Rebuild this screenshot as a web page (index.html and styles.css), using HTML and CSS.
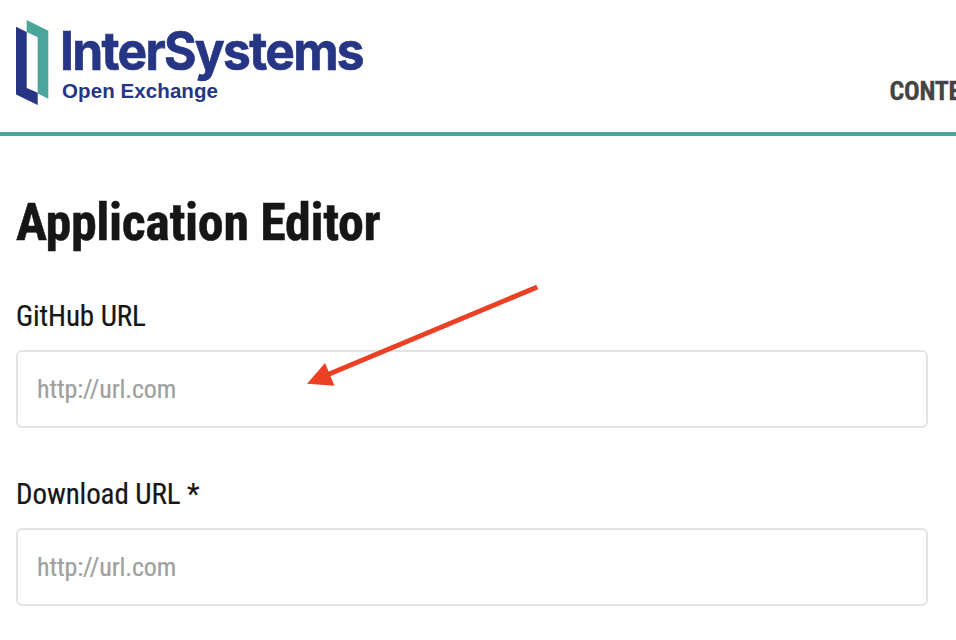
FILE: index.html
```html
<!DOCTYPE html>
<html lang="en">
<head>
<meta charset="utf-8">
<title>Application Editor</title>
<link rel="stylesheet" href="styles.css">
</head>
<body>
<header class="header">
  <div class="brand">
    <svg class="mark" viewBox="0 0 34 86" width="34" height="86">
      <path fill="#263685" d="M0 6.7L10.7 12V68L21.7 72.8V85L0 74.5Z"/>
      <path fill="#4aa59b" d="M10.7 0L32.3 10.7V78.7L21.7 73.5V17.3L10.7 12Z"/>
    </svg>
    <svg class="words" viewBox="0 0 310 90" width="310" height="90">
      <text class="name" x="-2" y="49.6" textLength="303" lengthAdjust="spacingAndGlyphs">InterSystems</text>
      <text class="sub" x="0" y="77.7" textLength="156">Open Exchange</text>
    </svg>
  </div>
  <nav class="nav">CONTESTS</nav>
</header>
<main class="main">
  <h1 class="title">Application Editor</h1>
  <label class="field"><span class="label">GitHub URL</span><input class="input" placeholder="http://url.com"></label>
  <label class="field"><span class="label">Download URL *</span><input class="input" placeholder="http://url.com"></label>
</main>
<svg class="arrow" viewBox="0 0 240 110" width="240" height="110">
  <path d="M237.3 6L28 93.5" stroke="#ec4025" stroke-width="5"/>
  <path d="M7 102.7L25 82L34.5 104.7Z" fill="#ec4025"/>
</svg>
</body>
</html>
```
FILE: styles.css
```css
* { box-sizing: border-box; }
body { margin: 0; width: 956px; height: 640px; overflow: hidden; background: #fff; color: #161616; font-family: "Roboto Condensed", Roboto, sans-serif; font-stretch: 75%; }
.header { height: 136px; display: flex; justify-content: space-between; padding: 20px 0 0 16px; border-bottom: 4px solid #4aa59b; }
.brand { display: flex; gap: 12px; }
.words { overflow: visible; }
.name { font: 700 53px Inter, sans-serif; letter-spacing: -1.8px; fill: #263685; stroke: #263685; stroke-width: 0.7px; }
.sub { font: 700 20.5px "Liberation Sans", sans-serif; fill: #263685; }
.nav { width: 66.5px; padding-top: 56px; font-size: 26px; line-height: 30px; font-weight: 700; letter-spacing: -0.3px; color: #444; white-space: nowrap; -webkit-text-stroke: 0.3px #444; }
.main { padding: 57px 28px 0 16px; }
.title { margin: 0 0 43px; font-size: 52px; line-height: 60px; font-weight: 700; letter-spacing: -0.35px; -webkit-text-stroke: 0.5px #161616; }
.field { display: block; height: 178px; }
.label { display: block; height: 54px; font-size: 29px; line-height: 40px; letter-spacing: -0.1px; -webkit-text-stroke: 0.2px #161616; }
.input { display: block; width: 912px; height: 78px; padding: 0 19px; border: 2px solid #e4e4e4; border-radius: 6px; font: inherit; font-size: 26px; letter-spacing: -0.15px; }
.input::placeholder { color: #a0a0a0; opacity: 1; -webkit-text-stroke: 0.2px #a0a0a0; }
.arrow { position: absolute; left: 300px; top: 281px; }
```
